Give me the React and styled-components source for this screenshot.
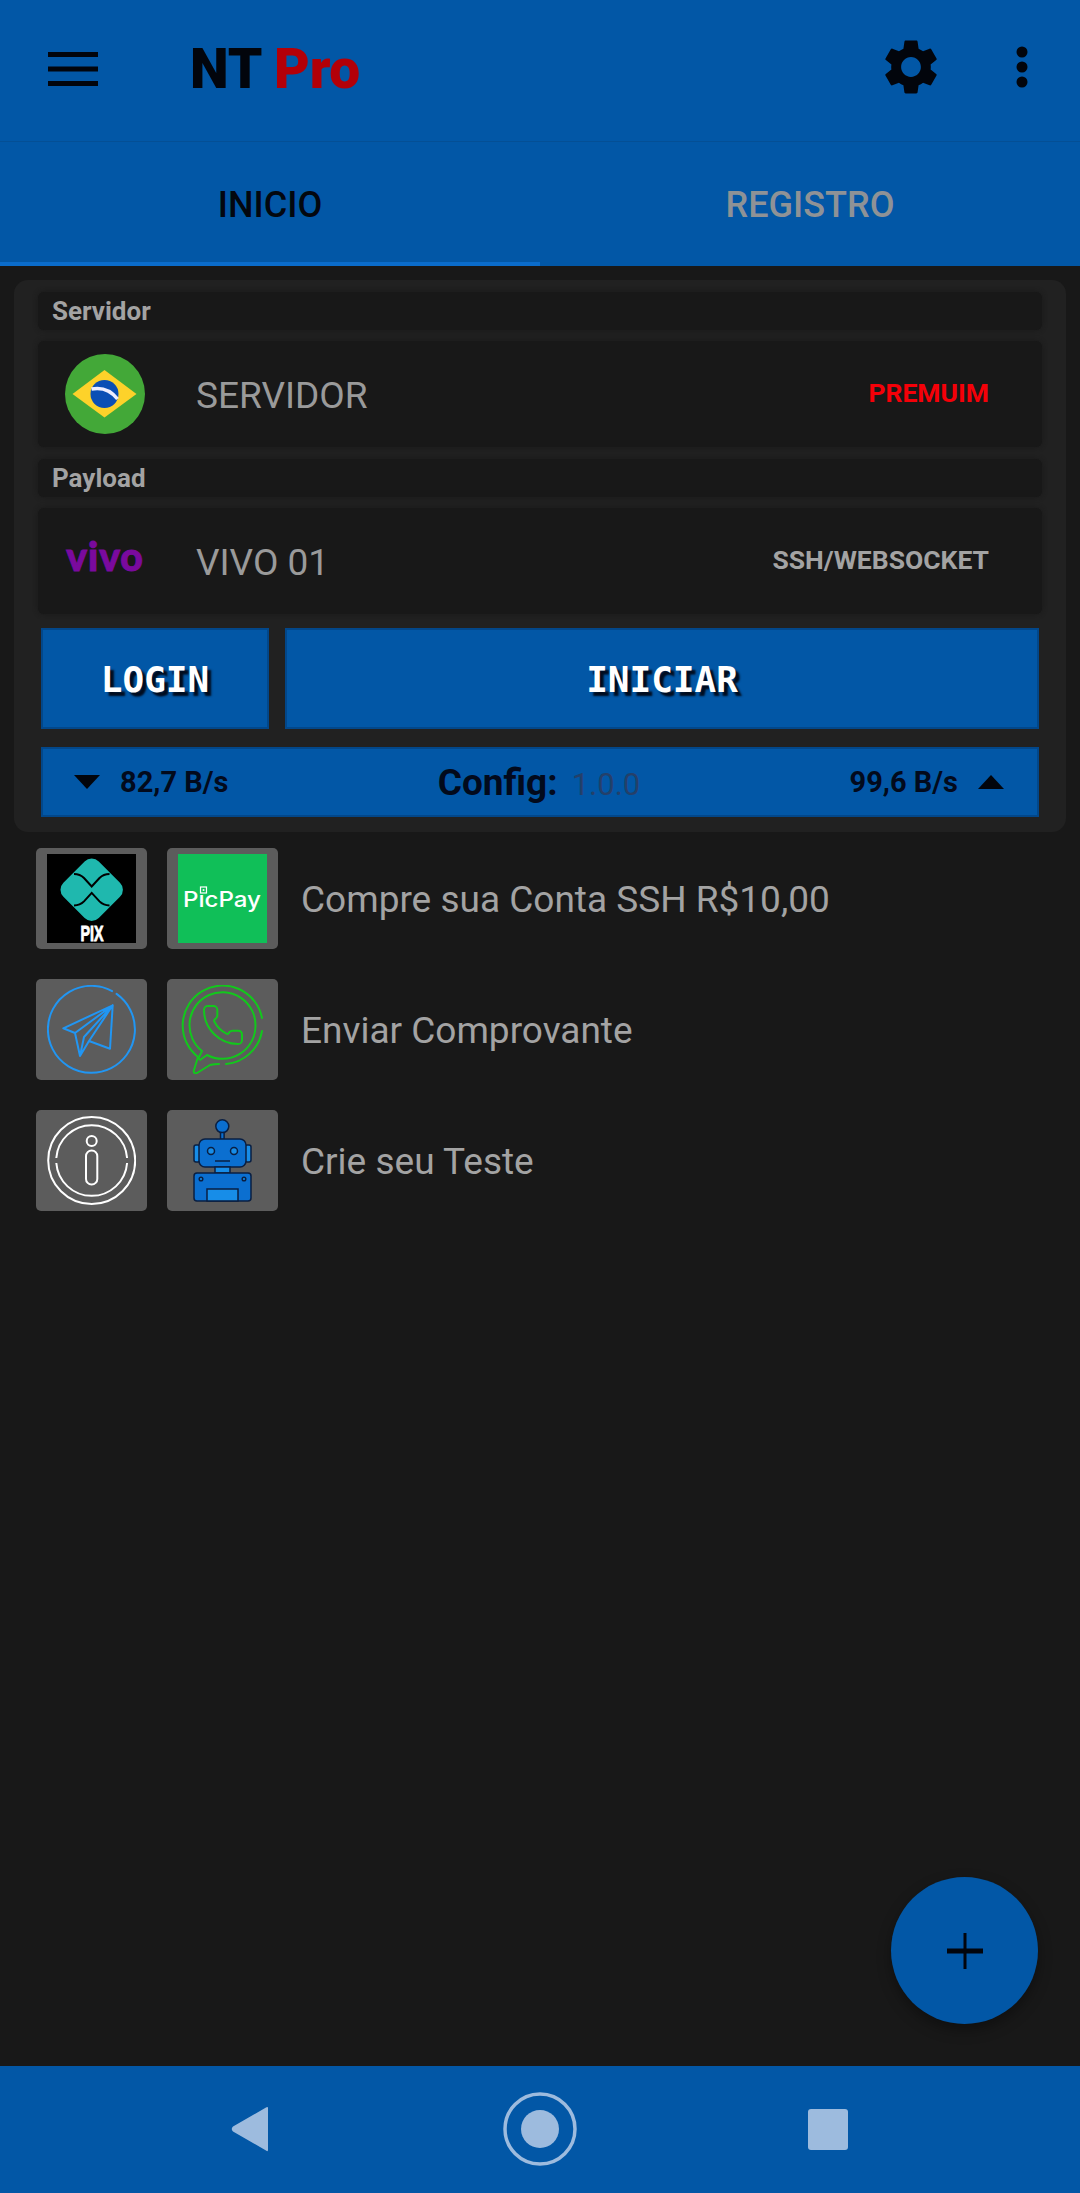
import React from "react";
import styled, { createGlobalStyle } from "styled-components";

const BLUE = "#0257a6";

const Global = createGlobalStyle`
  html, body { margin: 0; padding: 0; background: #181818; }
  * { box-sizing: border-box; }
  body { font-family: Roboto, "Liberation Sans", sans-serif; }
`;

const Page = styled.div`
  width: 1080px;
  height: 2193px;
  display: flex;
  flex-direction: column;
  position: relative;
  background: #181818;
  overflow: hidden;
`;

const AppBar = styled.header`
  height: 142px;
  flex: none;
  display: flex;
  align-items: center;
  background: ${BLUE};
  border-bottom: 1px solid #044f95;
  padding: 0 0 8px 48px;
`;
const MenuIcon = styled.svg`
  width: 50px;
  height: 34px;
  flex: none;
  margin: 4px 92px 0 0;
`;
const Title = styled.h1`
  margin: 0;
  flex: 1;
  font-size: 55px;
  font-weight: 900;
  line-height: 1;
  color: #02050c;
  letter-spacing: -0.2px;
  padding-top: 5px;
`;
const TitleAccent = styled.span`
  color: #b30008;
`;
const GearIcon = styled.svg`
  width: 66px;
  height: 66px;
  flex: none;
  margin-right: 71px;
`;
const DotsIcon = styled.svg`
  width: 14px;
  height: 42px;
  flex: none;
  margin-right: 51px;
`;

const Tabs = styled.nav`
  height: 124px;
  flex: none;
  display: flex;
  background: ${BLUE};
`;
const Tab = styled.div`
  flex: 1;
  display: flex;
  align-items: center;
  justify-content: center;
  font-size: 36px;
  font-weight: 500;
  padding-top: 5px;
  color: ${(p) => (p.$active ? "#03070f" : "#8e9296")};
  border-bottom: 4px solid ${(p) => (p.$active ? "#0a6ccb" : BLUE)};
`;

const Main = styled.main`
  flex: 1;
  padding: 14px 14px 0;
`;
const Card = styled.section`
  height: 552px;
  background: #212121;
  border-radius: 14px;
  padding: 12px 24px 15px;
  display: flex;
  flex-direction: column;
`;
const Label = styled.div`
  height: 38px;
  flex: none;
  background: #181818;
  border-radius: 6px;
  box-shadow: 0 0 5px #181818;
  padding-left: 14px;
  margin-bottom: 11px;
  display: flex;
  align-items: center;
  font-size: 26px;
  font-weight: 700;
  color: #a3a3a3;
`;
const SelectRow = styled.div`
  height: 106px;
  flex: none;
  background: #181818;
  border-radius: 6px;
  box-shadow: 0 0 5px #181818;
  margin-bottom: 12px;
  display: flex;
  align-items: center;
  padding: 0 53px 0 27px;
`;
const RowLogo = styled.div`
  width: 80px;
  height: 80px;
  flex: none;
  display: flex;
  align-items: center;
  justify-content: center;
  margin-right: 51px;
`;
const RowName = styled.div`
  flex: 1;
  font-size: 37px;
  color: #9a9a9a;
  margin-top: 3px;
`;
const RowTag = styled.div`
  font-size: 26.500px;
  font-weight: 700;
  color: ${(p) => p.$color};
  margin-top: -3px;
`;
const VivoMark = styled.span`
  font-family: Lato, sans-serif;
  font-weight: 900;
  font-size: 39px;
  line-height: 1;
  color: #7a0a9e;
  letter-spacing: 1px;
  -webkit-text-stroke: 1px #7a0a9e;
  margin-top: -10px;
`;
const Actions = styled.div`
  display: flex;
  gap: 16px;
  height: 101px;
  flex: none;
  margin: 2px 3px 18px;
`;
const ActionButton = styled.button`
  flex: ${(p) => (p.$wide ? "1" : "none")};
  width: ${(p) => (p.$wide ? "auto" : "228px")};
  border: 2px solid #02478a;
  background: ${BLUE};
  font-family: "DejaVu Sans Mono", monospace;
  font-weight: 700;
  font-size: 36px;
  color: #fff;
  padding: 2px 0 0;
  text-shadow: 4px 4px 2px #000c1e;
`;
const StatsBar = styled.div`
  height: 70px;
  flex: none;
  margin: 0 3px;
  background: ${BLUE};
  border: 2px solid #02478a;
  display: grid;
  grid-template-columns: 1fr auto 1fr;
  align-items: center;
  padding: 0 33px 0 31px;
`;
const Speed = styled.div`
  display: flex;
  align-items: center;
  justify-content: ${(p) => (p.$right ? "flex-end" : "flex-start")};
  gap: 20px;
  font-size: 29px;
  font-weight: 700;
  color: #020a1c;
`;
const Triangle = styled.svg`
  width: 26px;
  height: 14px;
  flex: none;
`;
const ConfigBox = styled.div`
  display: flex;
  align-items: baseline;
  gap: 14px;
`;
const ConfigLabel = styled.span`
  font-size: 37px;
  font-weight: 700;
  color: #020a1c;
`;
const ConfigValue = styled.span`
  font-size: 31px;
  color: #24406a;
`;

const LinkList = styled.div`
  display: flex;
  flex-direction: column;
  gap: 29px;
  padding: 15px 22px 0;
`;
const LinkRow = styled.div`
  display: flex;
  align-items: center;
  height: 102px;
`;
const Tile = styled.div`
  width: 111px;
  height: 101px;
  flex: none;
  background: #5c5c5c;
  border-radius: 5px;
  margin-right: ${(p) => (p.$last ? "23px" : "20px")};
  display: flex;
  align-items: center;
  justify-content: center;
`;
const TileArt = styled.svg`
  width: 89px;
  height: 89px;
  display: block;
`;
const LinkText = styled.div`
  font-size: 37px;
  color: #a3a3a3;
  margin-top: 2px;
`;

const Fab = styled.button`
  position: absolute;
  left: 891px;
  top: 1877px;
  width: 147px;
  height: 147px;
  border: 0;
  border-radius: 50%;
  background: ${BLUE};
  box-shadow: 0 6px 14px rgba(0, 0, 0, 0.35);
  display: flex;
  align-items: center;
  justify-content: center;
  padding: 0;
`;
const PlusIcon = styled.svg`
  width: 38px;
  height: 38px;
`;

const NavBar = styled.footer`
  height: 127px;
  flex: none;
  background: ${BLUE};
  display: grid;
  grid-template-columns: repeat(3, 1fr);
  align-items: center;
  justify-items: center;
  padding: 0 108px 2px;
`;
const NavIcon = styled.svg`
  width: 80px;
  height: 80px;
`;

const PixArt = () => (
  <TileArt viewBox="0 0 89 89">
    <rect width="89" height="89" fill="#000" />
    <rect x="19.700" y="10.700" width="50" height="50" rx="10" fill="#1fb8ae" transform="rotate(45 44.700 35.700)" />
    <path d="M27 20q6 0 10 4l7.700 8.500L52.500 24q4-4 10-4M27 51.400q6 0 10-4l7.700-8.500 7.800 8.500q4 4 10 4" fill="none" stroke="#000" strokeWidth="2" />
    <text x="45" y="87" textAnchor="middle" fontFamily="Liberation Sans" fontWeight="700" fontSize="22" fill="#fff" stroke="#fff" strokeWidth="0.900" textLength="23" lengthAdjust="spacingAndGlyphs">PIX</text>
  </TileArt>
);
const PicPayArt = () => (
  <TileArt viewBox="0 0 89 89">
    <rect width="89" height="89" fill="#10bf58" />
    <text x="5" y="53" fontFamily="Inter" fontWeight="500" fontSize="22" fill="#fff" textLength="78" lengthAdjust="spacingAndGlyphs">PıcPay</text>
    <rect x="22.500" y="33" width="6" height="6" fill="none" stroke="#fff" strokeWidth="1.200" />
    <rect x="24.700" y="35.200" width="1.700" height="1.700" fill="#fff" />
  </TileArt>
);
const TelegramArt = () => (
  <TileArt viewBox="0 0 89 89" fill="none" stroke="#2196f3" strokeWidth="2" strokeLinejoin="round" strokeLinecap="round">
    <path d="M69.600 8.900A43.500 43.500 0 1 1 65.100 6.100" />
    <path d="M65.700 20.300 16.300 43.300l11.700 4.700 5 23 9-15 21 7.700zM28 48l37.700-27.700M33 71l4-19 28.700-31.700M42 56l23.700-35.700" />
  </TileArt>
);
const WhatsArt = () => (
  <TileArt viewBox="0 0 89 89" fill="none" stroke="#12c81c" strokeWidth="2" strokeLinecap="round" strokeLinejoin="round">
    <path d="M84 46A40 40 0 0 1 48 79M41 79q-5 0-9 1l-13 8q-4 1-3-3l4-13A40 40 0 1 1 84 33" />
    <path d="M77.500 41A33 33 0 0 1 29 70l-7 5-1.500-2 3.500-7A33 33 0 1 1 77.500 41" />
    <path transform="translate(22.200 17.200) scale(1.900)" strokeWidth="1.050" d="M13.832 16.568a1 1 0 0 0 1.213-.303l.355-.465A2 2 0 0 1 17 15h3a2 2 0 0 1 2 2v3a2 2 0 0 1-2 2A18 18 0 0 1 2 4a2 2 0 0 1 2-2h3a2 2 0 0 1 2 2v3a2 2 0 0 1-.8 1.600l-.468.351a1 1 0 0 0-.292 1.233 14 14 0 0 0 6.392 6.384" />
  </TileArt>
);
const InfoArt = () => (
  <TileArt viewBox="0 0 89 89" fill="none" stroke="#fff" strokeWidth="2">
    <circle cx="44.700" cy="44.500" r="43.500" />
    <path d="M9.300 42A35.500 35.500 0 0 1 80.100 42M80.100 47A35.500 35.500 0 0 1 9.300 47" />
    <rect x="39" y="34.500" width="11.300" height="34" rx="5.600" />
    <circle cx="44.700" cy="25" r="5" />
  </TileArt>
);
const RobotArt = () => (
  <TileArt viewBox="0 0 89 89" stroke="#0a1f42" strokeWidth="1.500">
    <circle cx="44.300" cy="10.300" r="6.500" fill="#0b6fd0" />
    <rect x="42.500" y="16.500" width="3.600" height="7" fill="#0b6fd0" />
    <rect x="16" y="29" width="6" height="17" rx="2" fill="#178de8" />
    <rect x="67" y="29" width="6" height="17" rx="2" fill="#178de8" />
    <rect x="21" y="23" width="47" height="28" rx="6" fill="#0b6fd0" />
    <circle cx="33" cy="35" r="3.500" fill="#178de8" />
    <circle cx="56" cy="35" r="3.500" fill="#178de8" />
    <path d="M37 45h15" fill="none" />
    <rect x="37" y="51" width="15" height="6" fill="#178de8" />
    <rect x="16" y="57" width="57" height="28" rx="3" fill="#0b6fd0" />
    <rect x="29" y="73" width="31" height="12" fill="#178de8" />
    <circle cx="23" cy="63" r="1.800" fill="#178de8" />
    <circle cx="66" cy="63" r="1.800" fill="#178de8" />
  </TileArt>
);
const BrazilFlag = () => (
  <svg width="80" height="80" viewBox="0 0 80 80">
    <circle cx="40" cy="40" r="40" fill="#43a838" />
    <path d="M39.500 16 71.500 40 39.500 63.500 7.500 40z" fill="#fdd22a" />
    <circle cx="39.500" cy="40" r="14" fill="#0b4fb5" />
    <path d="M26.500 35q16-3 26 10" fill="none" stroke="#eef" strokeWidth="3.500" />
  </svg>
);

const links = [
  { art: [PixArt, PicPayArt], text: "Compre sua Conta SSH R$10,00" },
  { art: [TelegramArt, WhatsArt], text: "Enviar Comprovante" },
  { art: [InfoArt, RobotArt], text: "Crie seu Teste" },
];

export default function App() {
  return (
    <Page>
      <Global />
      <AppBar>
        <MenuIcon viewBox="0 0 50 34">
          <path d="M0 0h50v5H0zM0 14.500h50v5H0zM0 29h50v5H0z" fill="#02050c" />
        </MenuIcon>
        <Title>
          NT <TitleAccent>Pro</TitleAccent>
        </Title>
        <GearIcon viewBox="0 0 24 24">
          <path fill="#02050c" d="M19.140 12.940c.04-.3.06-.61.06-.94 0-.32-.02-.64-.07-.94l2.030-1.580c.18-.14.23-.41.12-.61l-1.920-3.320c-.12-.22-.37-.29-.59-.22l-2.390.96c-.5-.38-1.030-.7-1.620-.94l-.36-2.540c-.04-.24-.24-.41-.48-.41h-3.840c-.24 0-.43.17-.47.41l-.36 2.540c-.59.24-1.130.57-1.620.94l-2.390-.96c-.22-.08-.47 0-.59.22L2.740 8.870c-.12.21-.08.47.12.61l2.030 1.580c-.05.3-.09.63-.09.94s.02.64.07.94l-2.030 1.580c-.18.14-.23.41-.12.61l1.920 3.320c.12.22.37.29.59.22l2.390-.96c.5.38 1.030.7 1.620.94l.36 2.540c.05.24.24.41.48.41h3.840c.24 0 .44-.17.47-.41l.36-2.540c.59-.24 1.130-.56 1.620-.94l2.390.96c.22.08.47 0 .59-.22l1.920-3.320c.12-.22.07-.47-.12-.61l-2.010-1.580zM12 15.600c-1.980 0-3.600-1.620-3.600-3.600s1.620-3.600 3.600-3.600 3.600 1.620 3.600 3.600-1.620 3.600-3.600 3.600z" />
        </GearIcon>
        <DotsIcon viewBox="0 0 14 42">
          <circle cx="7" cy="6" r="5.500" fill="#02050c" />
          <circle cx="7" cy="21" r="5.500" fill="#02050c" />
          <circle cx="7" cy="36" r="5.500" fill="#02050c" />
        </DotsIcon>
      </AppBar>
      <Tabs>
        <Tab $active>INICIO</Tab>
        <Tab>REGISTRO</Tab>
      </Tabs>
      <Main>
        <Card>
          <Label>Servidor</Label>
          <SelectRow>
            <RowLogo><BrazilFlag /></RowLogo>
            <RowName>SERVIDOR</RowName>
            <RowTag $color="#f40008">PREMUIM</RowTag>
          </SelectRow>
          <Label>Payload</Label>
          <SelectRow>
            <RowLogo><VivoMark>vivo</VivoMark></RowLogo>
            <RowName>VIVO 01</RowName>
            <RowTag $color="#a3a3a3">SSH/WEBSOCKET</RowTag>
          </SelectRow>
          <Actions>
            <ActionButton>LOGIN</ActionButton>
            <ActionButton $wide>INICIAR</ActionButton>
          </Actions>
          <StatsBar>
            <Speed>
              <Triangle viewBox="0 0 26 14"><path d="M0 0h26L13 14z" fill="#02050c" /></Triangle>
              82,7 B/s
            </Speed>
            <ConfigBox>
              <ConfigLabel>Config:</ConfigLabel>
              <ConfigValue>1.0.0</ConfigValue>
            </ConfigBox>
            <Speed $right>
              99,6 B/s
              <Triangle viewBox="0 0 26 14"><path d="M0 14h26L13 0z" fill="#02050c" /></Triangle>
            </Speed>
          </StatsBar>
        </Card>
        <LinkList>
          {links.map((l) => {
            const [A, B] = l.art;
            return (
              <LinkRow key={l.text}>
                <Tile><A /></Tile>
                <Tile $last><B /></Tile>
                <LinkText>{l.text}</LinkText>
              </LinkRow>
            );
          })}
        </LinkList>
      </Main>
      <Fab aria-label="Adicionar">
        <PlusIcon viewBox="0 0 38 38"><path d="M17.500 1h3v15.500H37v5H20.500V37h-3V21.500H1v-5h16.500z" fill="#02050c" /></PlusIcon>
      </Fab>
      <NavBar>
        <NavIcon viewBox="0 0 80 80">
          <path d="M56 19v42q0 2-2 .5L21 42.500q-2.500-2.500 0-5l33-19q2-1 2 .5z" fill="#9dbbde" />
        </NavIcon>
        <NavIcon viewBox="0 0 80 80">
          <circle cx="40" cy="40" r="35" fill="none" stroke="#9dbbde" strokeWidth="3.500" />
          <circle cx="40" cy="40" r="19" fill="#9dbbde" />
        </NavIcon>
        <NavIcon viewBox="0 0 80 80">
          <rect x="20" y="20" width="40" height="41" rx="3" fill="#9dbbde" />
        </NavIcon>
      </NavBar>
    </Page>
  );
}
